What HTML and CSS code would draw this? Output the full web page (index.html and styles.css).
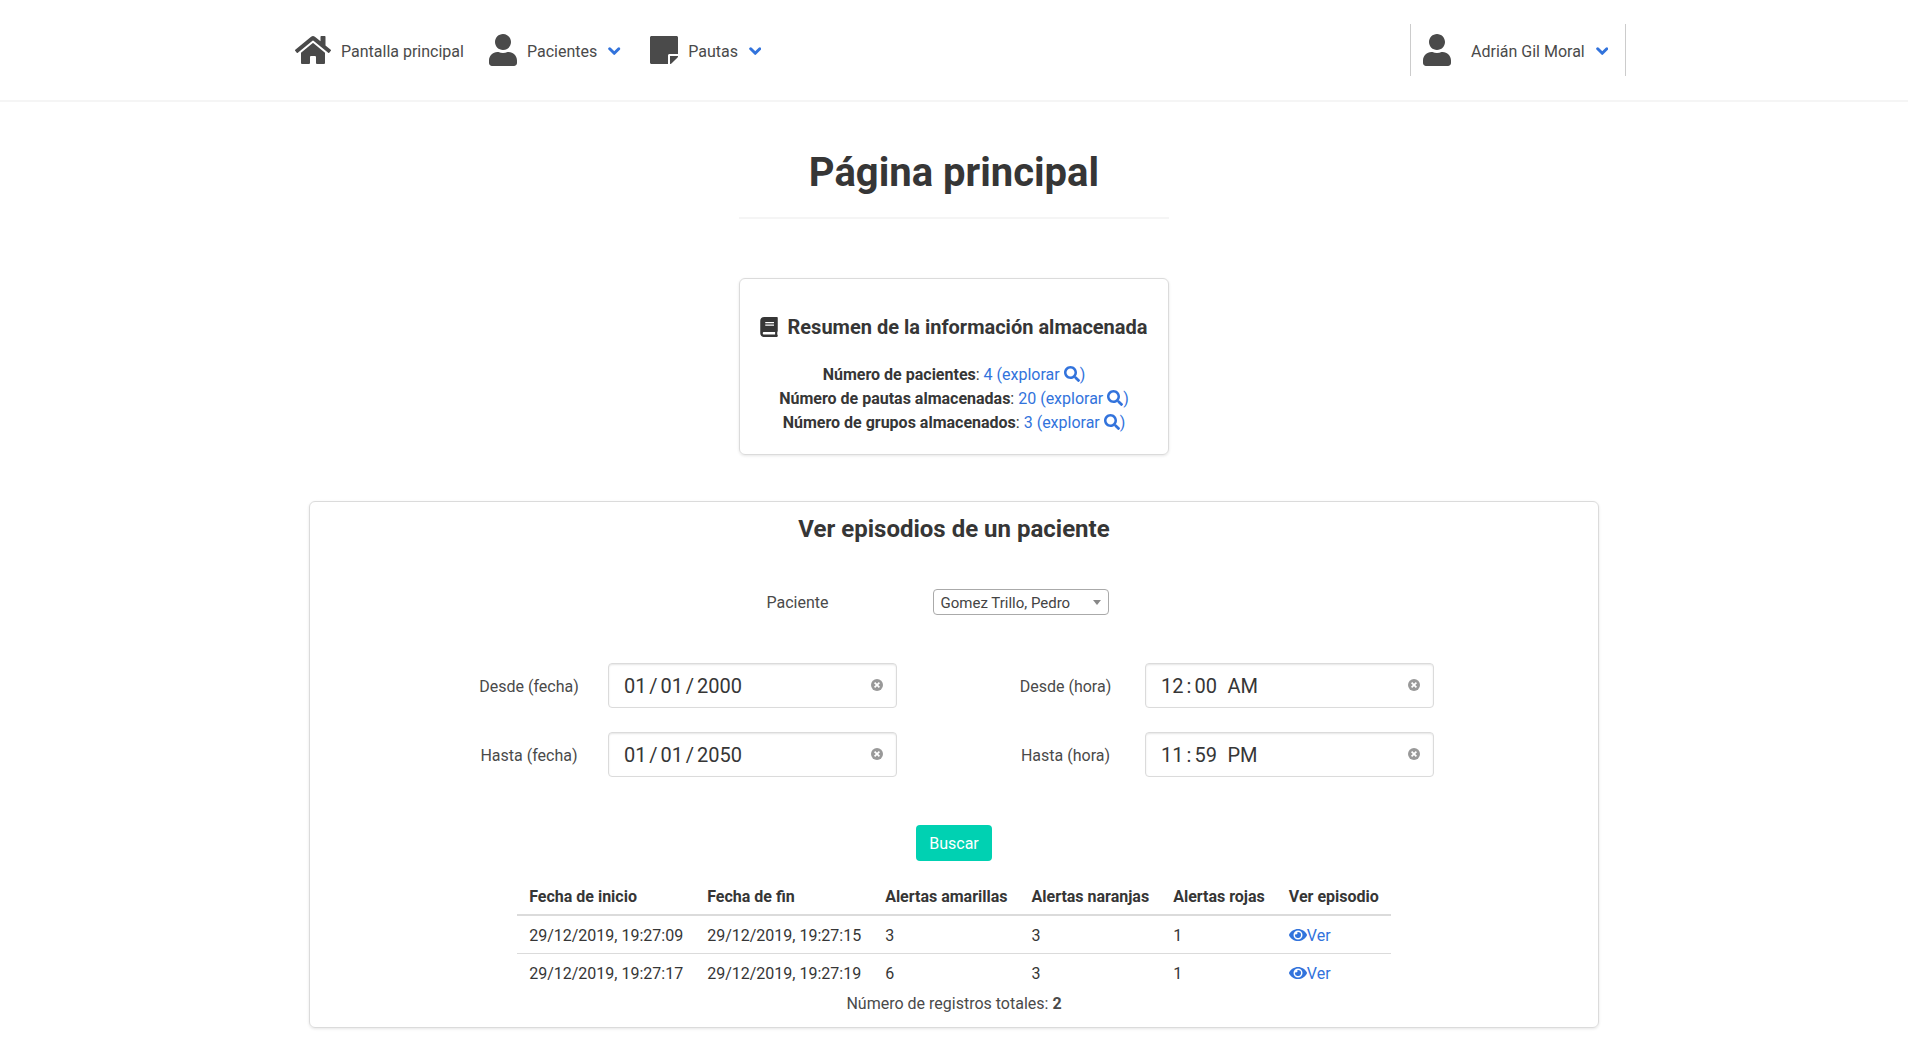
FILE: index.html
```html
<!DOCTYPE html>
<html lang="es">
<head>
<meta charset="utf-8">
<title>Página principal</title>
<link rel="stylesheet" href="styles.css">
</head>
<body>
<svg class="sprite" aria-hidden="true">
  <symbol id="home" viewBox="0 0 576 512"><path d="M280.37 148.26L96 300.11V464a16 16 0 0 0 16 16l112.06-.29a16 16 0 0 0 15.92-16V368a16 16 0 0 1 16-16h64a16 16 0 0 1 16 16v95.64a16 16 0 0 0 16 16.05L464 480a16 16 0 0 0 16-16V300L295.67 148.26a12.19 12.19 0 0 0-15.3 0zM571.6 251.47L488 182.56V44.05a12 12 0 0 0-12-12h-56a12 12 0 0 0-12 12v72.61L318.47 43a48 48 0 0 0-61 0L4.34 251.47a12 12 0 0 0-1.6 16.9l25.5 31A12 12 0 0 0 45.15 301l235.22-193.74a12.19 12.19 0 0 1 15.3 0L530.9 301a12 12 0 0 0 16.9-1.6l25.5-31a12 12 0 0 0-1.7-16.93z"/></symbol>
  <symbol id="user" viewBox="0 0 448 512"><path d="M224 256c70.7 0 128-57.3 128-128S294.700 0 224 0 96 57.300 96 128s57.300 128 128 128zm89.600 32h-16.700c-22.200 10.200-46.900 16-72.900 16s-50.600-5.800-72.900-16h-16.700C60.200 288 0 348.200 0 422.400V464c0 26.500 21.500 48 48 48h352c26.500 0 48-21.500 48-48v-41.600c0-74.200-60.200-134.400-134.400-134.400z"/></symbol>
  <symbol id="note" viewBox="0 0 448 512"><path d="M312 320h136V56c0-13.300-10.700-24-24-24H24C10.700 32 0 42.700 0 56v400c0 13.300 10.700 24 24 24h264V344c0-13.200 10.800-24 24-24zm129 55l-98 98c-4.500 4.500-10.600 7-17 7h-6V352h128v6.100c0 6.300-2.500 12.400-7 16.900z"/></symbol>
  <symbol id="book" viewBox="0 0 448 512"><path d="M448 360V24c0-13.300-10.700-24-24-24H96C43 0 0 43 0 96v320c0 53 43 96 96 96h328c13.300 0 24-10.700 24-24v-16c0-7.500-3.500-14.300-8.900-18.700-4.200-15.400-4.200-59.300 0-74.700 5.400-4.300 8.900-11.100 8.900-18.600zM128 134c0-3.300 2.700-6 6-6h212c3.300 0 6 2.700 6 6v20c0 3.300-2.700 6-6 6H134c-3.300 0-6-2.700-6-6v-20zm0 64c0-3.300 2.700-6 6-6h212c3.300 0 6 2.700 6 6v20c0 3.300-2.700 6-6 6H134c-3.300 0-6-2.700-6-6v-20zm253.400 250H96c-17.700 0-32-14.300-32-32 0-17.600 14.400-32 32-32h285.400c-1.900 17.100-1.900 46.900 0 64z"/></symbol>
  <symbol id="search" viewBox="0 0 512 512"><path d="M505 442.700L405.300 343c-4.500-4.500-10.600-7-17-7H372c27.600-35.300 44-79.700 44-128C416 93.100 322.900 0 208 0S0 93.100 0 208s93.100 208 208 208c48.300 0 92.700-16.400 128-44v16.300c0 6.400 2.500 12.500 7 17l99.700 99.700c9.400 9.400 24.600 9.400 33.900 0l28.300-28.300c9.400-9.400 9.400-24.600.1-34zM208 336c-70.700 0-128-57.200-128-128 0-70.700 57.200-128 128-128 70.700 0 128 57.200 128 128 0 70.700-57.200 128-128 128z"/></symbol>
  <symbol id="eye" viewBox="0 0 576 512"><path d="M572.520 241.400C518.290 135.590 410.930 64 288 64S57.680 135.640 3.480 241.410a32.350 32.350 0 0 0 0 29.190C57.710 376.410 165.070 448 288 448s230.320-71.640 284.520-177.410a32.350 32.350 0 0 0 0-29.190zM288 400a144 144 0 1 1 144-144 143.930 143.930 0 0 1-144 144zm0-240a95.310 95.310 0 0 0-25.310 3.790 47.850 47.850 0 0 1-66.900 66.900A95.780 95.780 0 1 0 288 160z"/></symbol>
  <symbol id="arrow" viewBox="0 0 12.500 8.500"><path d="M1.700 1.800l4.550 4.500L10.800 1.800" fill="none" stroke="#3273dc" stroke-width="3" stroke-linecap="round" stroke-linejoin="round"/></symbol>
  <symbol id="clear" viewBox="0 0 12 12"><circle cx="6" cy="6" r="6" fill="#999"/><path d="M3.600 3.600l4.800 4.800m0-4.800L3.600 8.400" stroke="#fff" stroke-width="1.700"/></symbol>
</svg>
<div class="page">
  <nav class="navbar">
    <div class="nav-group">
      <a class="nav-item home"><svg class="i-home"><use href="#home"/></svg><span>Pantalla principal</span></a>
      <a class="nav-item patients"><svg class="i-large"><use href="#user"/></svg><span>Pacientes</span><svg class="arrow"><use href="#arrow"/></svg></a>
      <a class="nav-item"><svg class="i-large"><use href="#note"/></svg><span>Pautas</span><svg class="arrow"><use href="#arrow"/></svg></a>
    </div>
    <a class="nav-item account"><svg class="i-large"><use href="#user"/></svg><span>Adrián Gil Moral</span><svg class="arrow"><use href="#arrow"/></svg></a>
  </nav>
  <main>
    <h1 class="title">Página principal</h1>
    <section class="box summary">
      <h2><svg class="i-book"><use href="#book"/></svg>Resumen de la información almacenada</h2>
      <p><b>Número de pacientes</b>: <a>4 (explorar <svg class="i-search"><use href="#search"/></svg>)</a></p>
      <p><b>Número de pautas almacenadas</b>: <a>20 (explorar <svg class="i-search"><use href="#search"/></svg>)</a></p>
      <p><b>Número de grupos almacenados</b>: <a>3 (explorar <svg class="i-search"><use href="#search"/></svg>)</a></p>
    </section>
    <section class="box episodes">
      <h2>Ver episodios de un paciente</h2>
      <div class="patient-row"><label>Paciente</label><div class="select">Gomez Trillo, Pedro<span class="caret"></span></div></div>
      <div class="filters">
        <label>Desde (fecha)</label>
        <div class="input"><span>01</span><i>/</i><span>01</span><i>/</i><span>2000</span><svg class="i-clear"><use href="#clear"/></svg></div>
        <label class="hour">Desde (hora)</label>
        <div class="input"><span>12</span><i class="colon">:</i><span>00</span><span class="ampm">AM</span><svg class="i-clear"><use href="#clear"/></svg></div>
        <label>Hasta (fecha)</label>
        <div class="input"><span>01</span><i>/</i><span>01</span><i>/</i><span>2050</span><svg class="i-clear"><use href="#clear"/></svg></div>
        <label class="hour">Hasta (hora)</label>
        <div class="input"><span>11</span><i class="colon">:</i><span>59</span><span class="ampm">PM</span><svg class="i-clear"><use href="#clear"/></svg></div>
      </div>
      <button class="button">Buscar</button>
      <table class="table">
        <thead><tr><th>Fecha de inicio</th><th>Fecha de fin</th><th>Alertas amarillas</th><th>Alertas naranjas</th><th>Alertas rojas</th><th>Ver episodio</th></tr></thead>
        <tbody>
          <tr><td>29/12/2019, 19:27:09</td><td>29/12/2019, 19:27:15</td><td>3</td><td>3</td><td>1</td><td><a><svg class="i-eye"><use href="#eye"/></svg>Ver</a></td></tr>
          <tr><td>29/12/2019, 19:27:17</td><td>29/12/2019, 19:27:19</td><td>6</td><td>3</td><td>1</td><td><a><svg class="i-eye"><use href="#eye"/></svg>Ver</a></td></tr>
        </tbody>
      </table>
      <p class="total">Número de registros totales: <b>2</b></p>
    </section>
  </main>
</div>
</body>
</html>
```
FILE: styles.css
```css
* { box-sizing: border-box; margin: 0; padding: 0; }
html { overflow: hidden; background: #fff; }
body { font: 16px/24px Roboto, sans-serif; color: #4a4a4a; }
svg { fill: currentColor; flex: none; }
a { color: #3273dc; }
b { font-weight: 700; }
.sprite { display: none; }
.page { width: 1908px; height: 1039px; }

.navbar { display: flex; justify-content: space-between; height: 102px; padding: 24px 282px 24px 295px; border-bottom: 2px solid #f5f5f5; }
.nav-group { display: flex; }
.nav-item { display: flex; align-items: center; height: 52px; color: #4a4a4a; white-space: nowrap; }
.nav-item span { padding-top: 4px; }
.home { margin-right: 25px; }
.patients { margin-right: 28px; }
.i-home { width: 36px; height: 32px; margin-right: 10px; }
.i-large { width: 28px; height: 32px; margin-right: 10px; }
.arrow { width: 12.5px; height: 8.5px; margin: 3px 1.5px 0 11px; }
.account { width: 216px; padding-left: 12px; border: solid #ccc; border-width: 0 1px; }
.account .i-large { margin-right: 20px; }

main { display: flex; flex-direction: column; align-items: center; }
.title { width: 430px; height: 117px; padding-top: 48px; border-bottom: 2px solid #f5f5f5; font-size: 40px; line-height: 45px; font-weight: 700; color: #363636; text-align: center; }
.box { border: 1px solid #dbdbdb; border-radius: 6px; box-shadow: 0 1px 3px rgba(0, 0, 0, .1); text-align: center; }
.summary { width: 430px; height: 177px; margin-top: 59px; padding-top: 36px; color: #363636; }
.summary h2 { display: flex; align-items: center; justify-content: center; margin-bottom: 24px; padding-right: 1px; font-size: 20px; line-height: 24px; }
.i-book { width: 18px; height: 20px; margin-right: 10px; }
.i-search { width: 16px; height: 16px; vertical-align: -2px; }

.episodes { display: flex; flex-direction: column; align-items: center; width: 1290px; height: 527px; margin-top: 46px; padding-top: 14px; }
.episodes h2 { font-size: 24px; line-height: 27px; color: #363636; }
.patient-row { display: flex; align-items: center; height: 26px; margin-top: 46px; padding-right: 33px; }
.patient-row label { margin-right: 104px; padding-top: 2px; }
.select { display: flex; align-items: center; justify-content: space-between; width: 176px; height: 26px; padding: 1px 7px 0; border: 1px solid #aaa; border-radius: 4px; font-size: 15px; color: #444; }
.caret { border: solid transparent; border-width: 5px 4px 0; border-top-color: #888; }
.filters { display: grid; grid-template-columns: 158px 289px 248px 289px; row-gap: 24px; align-items: center; margin-top: 48px; padding-right: 24px; box-sizing: content-box; }
.filters label { padding-top: 3px; text-align: center; }
.filters .hour { padding-left: 89px; }
.input { display: flex; align-items: center; height: 45px; padding: 0 13px 0 15px; border: 1px solid #dbdbdb; border-radius: 4px; box-shadow: inset 0 1px 2px rgba(10, 10, 10, .1); font-size: 20px; color: #363636; }
.input i { width: 14px; font-style: normal; text-align: center; }
.input .colon { width: 11px; }
.ampm { margin-left: 10.5px; }
.i-clear { width: 12px; height: 12px; margin: 0 0 1px auto; }
.button { width: 76px; height: 36px; margin-top: 48px; padding-top: 1px; border: 0; border-radius: 4px; background: #00d1b2; color: #fff; font: 16px/24px Roboto, sans-serif; }
.table { margin-top: 15px; border-collapse: separate; border-spacing: 0; color: #363636; text-align: left; white-space: nowrap; }
.table th { padding: 9px 12px 5px; border-bottom: 2px solid #dbdbdb; }
.table td { height: 38px; padding: 8px 12px 5px; border-bottom: 1px solid #dbdbdb; }
.table tr:last-child td { border-bottom-color: transparent; }
.i-eye { display: inline-block; width: 18px; height: 16px; vertical-align: -2px; }
```
